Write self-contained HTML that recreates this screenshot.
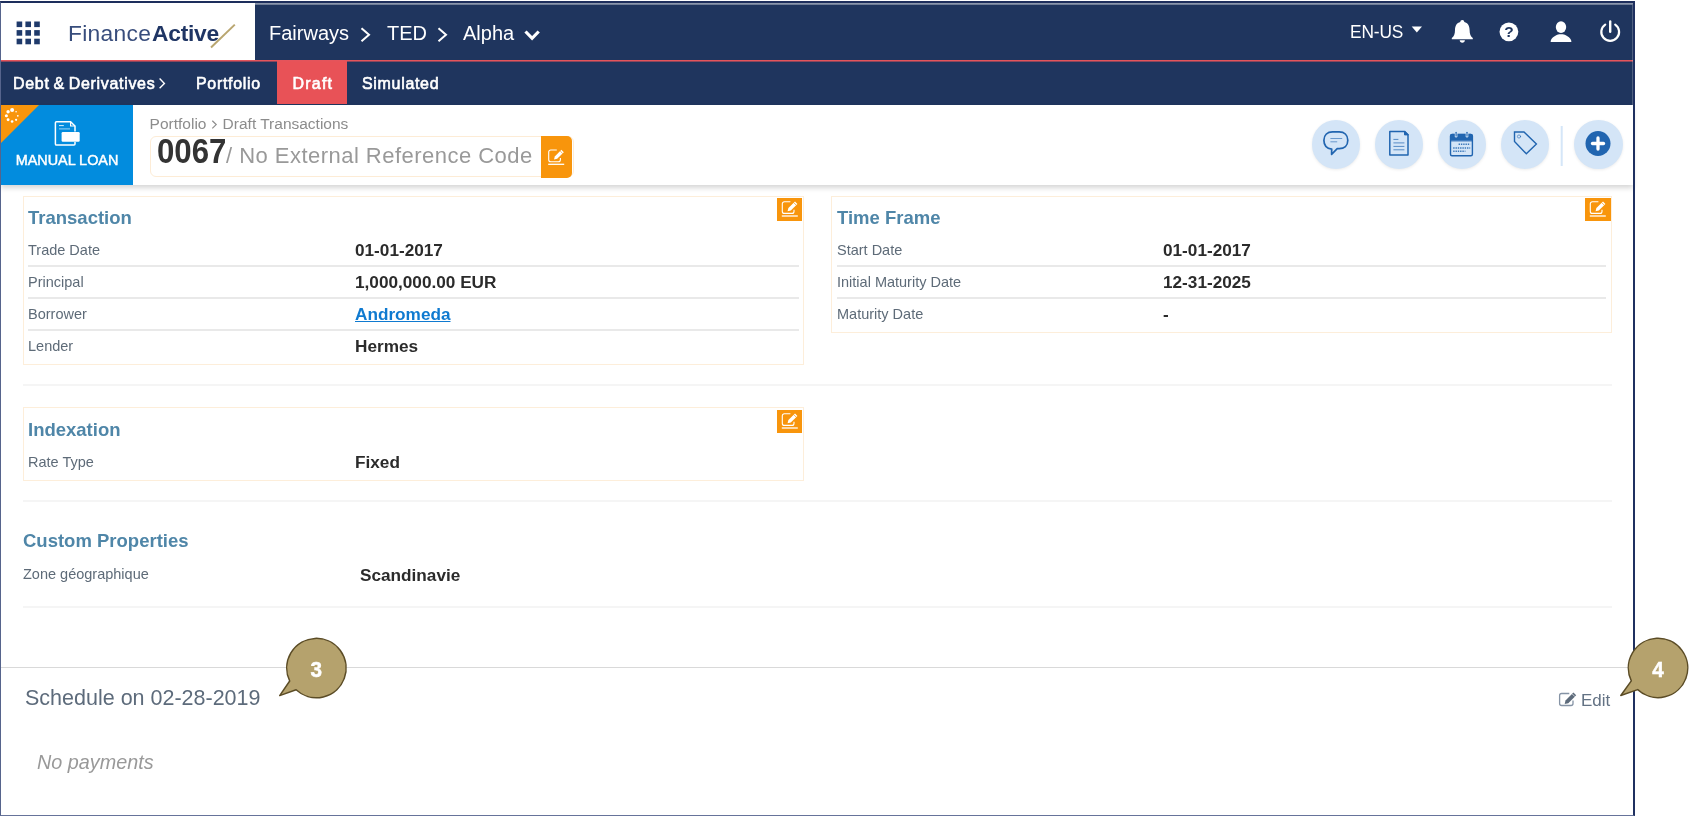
<!DOCTYPE html>
<html lang="en">
<head>
<meta charset="utf-8">
<title>FinanceActive - Manual Loan 0067</title>
<style>
*{box-sizing:border-box;margin:0;padding:0}
html,body{width:1689px;height:816px;overflow:hidden;background:#fff}
body{font-family:"Liberation Sans",sans-serif;position:relative;color:#333}
.abs{position:absolute}
#frame{position:absolute;left:0;top:1px;width:1635px;height:815px;border-style:solid;border-color:#1d2e5c #1f3060 #66739a #56648c;border-width:2px 2px 1px 1px;pointer-events:none;z-index:30}
#topline{position:absolute;left:255px;top:3px;width:1378px;height:2px;background:linear-gradient(rgba(255,255,255,.55),rgba(255,255,255,.3));z-index:31}
#topbar{position:absolute;left:1px;top:3px;width:1632px;height:57px;background:#1f355e}
#logo{position:absolute;left:0;top:0;width:254px;height:57px;background:#fff}
#redline{position:absolute;left:1px;top:60px;width:1632px;height:2px;background:linear-gradient(#e5545b 50%,rgba(229,84,91,.55) 50%);z-index:2}
#subnav{position:absolute;left:1px;top:61px;width:1632px;height:44px;background:#1f355e}
#subnav .t{position:absolute;top:1px;height:44px;line-height:43px;color:#fff;font-size:16px;font-weight:normal;-webkit-text-stroke:.6px #fff;letter-spacing:.68px;word-spacing:-1.2px;white-space:nowrap;transform:scaleY(1.05);transform-origin:0 62%}
#draft{position:absolute;left:276px;top:0;width:70px;height:43px;background:#e85257}
.crumb{position:absolute;top:1px;height:57px;line-height:59px;color:#fff;font-size:20px;white-space:nowrap}
#header{position:absolute;left:1px;top:105px;width:1632px;height:80px;background:#fff;box-shadow:0 3px 5px rgba(0,0,0,.16)}
#tile{position:absolute;left:0;top:0;width:132px;height:80px;background:#028cde;overflow:hidden}
#tile .corner{position:absolute;left:0;top:0;width:0;height:0;border-top:38px solid #f8950c;border-right:38px solid transparent}
#tile .lbl{-webkit-text-stroke:0.45px #fff;position:absolute;left:0;width:132px;top:47px;text-align:center;color:#fff;font-size:14.4px;line-height:16px;white-space:nowrap}
#bc{position:absolute;left:148.600px;top:11px;font-size:15.5px;line-height:16px;color:#8c8c8c;white-space:nowrap}
#titlebox{position:absolute;left:149px;top:31px;width:424px;height:41px;border:1px solid #fdecd6;border-radius:6px}
#titlebox .num{position:absolute;left:6px;top:-5px;font-size:32px;line-height:40px;font-weight:bold;color:#333;transform:scale(.975,1.07);transform-origin:0 78%}
#titlebox .ref{position:absolute;left:75px;top:-1px;font-size:22px;letter-spacing:.47px;line-height:40px;color:#999;white-space:nowrap}
#titlebox .btn{position:absolute;left:390px;top:-1px;width:31px;height:42px;background:#f8950c;border-radius:0 5px 5px 0}
.circ{position:absolute;top:15px;width:48.500px;height:48.500px;border-radius:50%;background:#d4e5f7;box-shadow:0 1px 3px rgba(0,0,0,.08)}
.panel{position:absolute;border:1px solid #fdeeda;background:#fff}
.ptitle{position:absolute;font-size:18.5px;font-weight:bold;color:#4f86a8;line-height:20px;white-space:nowrap}
.lab{position:absolute;margin-top:-1px;font-size:14.5px;line-height:16px;color:#5e6b78;white-space:nowrap}
.val{position:absolute;margin-top:0px;font-size:17.2px;line-height:20px;font-weight:bold;color:#2b2b2b;white-space:nowrap}
.sep{position:absolute;height:2px;background:#e9e9e9}
.hr{position:absolute;height:2px;background:#f5f5f5}
.ebtn{position:absolute;width:25px;height:23px;background:#f8950c}
</style>
</head>
<body>
<div id="root" style="position:absolute;left:0;top:0;width:1689px;height:816px;will-change:transform">
<div id="topbar">
  <div id="logo">
    <svg class="abs" style="left:15px;top:18px" width="26" height="26" viewBox="0 0 26 26"><g fill="#1f3a6b"><rect x="0.6" y="0.5" width="5.6" height="5.6"/><rect x="9.4" y="0.5" width="5.6" height="5.6"/><rect x="18.2" y="0.5" width="5.6" height="5.6"/><rect x="0.6" y="9.1" width="5.6" height="5.6"/><rect x="9.4" y="9.1" width="5.6" height="5.6"/><rect x="18.2" y="9.1" width="5.6" height="5.6"/><rect x="0.6" y="17.7" width="5.6" height="5.6"/><rect x="9.4" y="17.7" width="5.6" height="5.6"/><rect x="18.2" y="17.7" width="5.6" height="5.6"/></g></svg>
    <div class="abs" id="lg" style="left:67px;top:10px;font-size:22.800px;line-height:40px;color:#384d7c;white-space:nowrap;letter-spacing:0.300px">Finance<b style="color:#1f3564;margin-left:0.800px;letter-spacing:-0.250px">Active</b></div>
    <svg class="abs" style="left:205px;top:18px" width="34" height="30" viewBox="0 0 34 30"><line x1="5" y1="26.5" x2="28.8" y2="3.6" stroke="#b9a670" stroke-width="2"/></svg>
  </div>
  <div class="crumb" style="left:268px">Fairways</div>
  <div class="crumb" style="left:386px">TED</div>
  <div class="crumb" style="left:462px">Alpha</div>
  <div class="crumb" style="left:1349px;font-size:17.300px;top:0px;transform:scaleY(1.08);transform-origin:0 58%;letter-spacing:-0.100px">EN-US</div>
</div>
<div id="redline"></div>
<div id="subnav">
  <div class="t" style="left:12px">Debt &amp; Derivatives</div>
  <div class="t" style="left:195px">Portfolio</div>
  <div id="draft"></div>
  <div class="t" style="left:291.500px;letter-spacing:1.200px">Draft</div>
  <div class="t" style="left:361px">Simulated</div>
</div>
<div id="header">
  <div id="tile"><div class="corner"></div><div class="lbl">MANUAL LOAN</div></div>
  <div id="bc">Portfolio<span style="position:absolute;left:73px;top:0">Draft Transactions</span></div>
  <div id="titlebox"><span class="num">0067</span><span class="ref">/ No External Reference Code</span><div class="btn"></div></div>
  <div class="circ" style="left:1310.500px"></div>
  <div class="circ" style="left:1373.600px"></div>
  <div class="circ" style="left:1436.700px"></div>
  <div class="circ" style="left:1499.800px"></div>
  <div class="circ" style="left:1573px"></div>
</div>

<!-- Transaction panel -->
<div class="panel" style="left:23px;top:196px;width:781px;height:169px"></div>
<div class="ptitle" style="left:28px;top:208px">Transaction</div>
<div class="ebtn" style="left:777px;top:198px"></div>
<div class="lab" style="left:28px;top:243px">Trade Date</div>
<div class="val" style="left:355px;top:240px">01-01-2017</div>
<div class="sep" style="left:28px;top:265px;width:771px"></div>
<div class="lab" style="left:28px;top:275px">Principal</div>
<div class="val" style="left:355px;top:272px">1,000,000.00 EUR</div>
<div class="sep" style="left:28px;top:297px;width:771px"></div>
<div class="lab" style="left:28px;top:307px">Borrower</div>
<div class="val" style="left:355px;top:304px;color:#0f7ad0;text-decoration:underline">Andromeda</div>
<div class="sep" style="left:28px;top:329px;width:771px"></div>
<div class="lab" style="left:28px;top:339px">Lender</div>
<div class="val" style="left:355px;top:336px">Hermes</div>

<!-- Time Frame panel -->
<div class="panel" style="left:831px;top:196px;width:781px;height:137px"></div>
<div class="ptitle" style="left:837px;top:208px">Time Frame</div>
<div class="ebtn" style="left:1585px;top:198px;width:26px"></div>
<div class="lab" style="left:837px;top:243px">Start Date</div>
<div class="val" style="left:1163px;top:240px">01-01-2017</div>
<div class="sep" style="left:837px;top:265px;width:769px"></div>
<div class="lab" style="left:837px;top:275px">Initial Maturity Date</div>
<div class="val" style="left:1163px;top:272px">12-31-2025</div>
<div class="sep" style="left:837px;top:297px;width:769px"></div>
<div class="lab" style="left:837px;top:307px">Maturity Date</div>
<div class="val" style="left:1163px;top:304px">-</div>

<div class="hr" style="left:23px;top:384px;width:1589px"></div>

<!-- Indexation panel -->
<div class="panel" style="left:23px;top:407px;width:781px;height:74px"></div>
<div class="ptitle" style="left:28px;top:420px">Indexation</div>
<div class="ebtn" style="left:777px;top:410px"></div>
<div class="lab" style="left:28px;top:455px">Rate Type</div>
<div class="val" style="left:355px;top:452px">Fixed</div>

<div class="hr" style="left:23px;top:500px;width:1589px"></div>

<!-- Custom properties -->
<div class="ptitle" style="left:23px;top:531px">Custom Properties</div>
<div class="lab" style="left:23px;top:567px">Zone g&eacute;ographique</div>
<div class="val" style="left:360px;top:565px">Scandinavie</div>
<div class="hr" style="left:23px;top:606px;width:1589px"></div>

<!-- Schedule -->
<div class="abs" style="left:1px;top:667px;width:1632px;height:1px;background:#d9d9d9"></div>
<div class="abs" id="sched" style="left:25px;top:686px;font-size:21.5px;line-height:24px;color:#5d6b7b;white-space:nowrap">Schedule on 02-28-2019</div>
<div class="abs" id="nopay" style="left:37px;top:751px;font-size:19.8px;line-height:22px;font-style:italic;color:#999;white-space:nowrap">No payments</div>
<div class="abs" id="edit" style="left:1581px;top:691px;font-size:17px;line-height:20px;color:#637284;white-space:nowrap">Edit</div>

<svg id="ov" class="abs" style="left:0;top:0;z-index:40;pointer-events:none" width="1689" height="816" viewBox="0 0 1689 816">
<!-- spinner -->
<g fill="#fff"><circle cx="12.1" cy="110.1" r="2.0"/><circle cx="8.1" cy="111.8" r="1.7"/><circle cx="6.4" cy="115.8" r="1.55"/><circle cx="8.1" cy="119.8" r="1.45"/><circle cx="12.1" cy="121.5" r="1.3"/><circle cx="16.1" cy="119.8" r="1.1"/><circle cx="17.8" cy="115.8" r="0.9"/><circle cx="16.1" cy="111.8" r="0.8"/></g>
<!-- tile doc icon -->
<g fill="none" stroke="#fff" stroke-width="1.500" stroke-linejoin="round">
<path d="M75 131.500 V126 L70.600 121.700 H56.500 A1.100 1.100 0 0 0 55.400 122.800 V144 A1.100 1.100 0 0 0 56.500 145.100 H74 A1 1 0 0 0 75 144.100 V142"/>
<path d="M70.600 121.700 V126 H75" stroke-width="1.200"/>
<line x1="59" y1="125.600" x2="63.800" y2="125.600" stroke-width="1" opacity=".85"/>
<line x1="59" y1="128.900" x2="70" y2="128.900" stroke-width="1" opacity=".6"/>
</g>
<rect x="61.600" y="132" width="18.100" height="9.700" rx="1.200" fill="#fff"/>
<!-- title edit icon -->
<g transform="translate(548.2 149.5)" fill="none" stroke="#fff">
<path d="M8.600 0.500 H2.500 A2 2 0 0 0 0.500 2.500 V10.200 A2 2 0 0 0 2.500 12.200 H10.200 A2 2 0 0 0 12.200 10.200 V8.600" stroke-width="1.100"/>
<line x1="0" y1="14.800" x2="16" y2="14.800" stroke-width="1.300"/>
<path d="M5.800 10 L6.600 6.900 L13.200 0.300 L15.600 2.700 L9 9.300 Z" fill="#fff" stroke="none"/>
<line x1="12" y1="1.500" x2="14.400" y2="3.900" stroke="#f8950c" stroke-width="0.700"/>
</g>
<!-- panel edit icons -->
<g transform="translate(781.8 201.2)" fill="none" stroke="#fff">
<path d="M8.600 0.500 H2.500 A2 2 0 0 0 0.500 2.500 V10.200 A2 2 0 0 0 2.500 12.200 H10.200 A2 2 0 0 0 12.200 10.200 V8.600" stroke-width="1.100"/>
<line x1="0" y1="14.800" x2="16" y2="14.800" stroke-width="1.300"/>
<path d="M5.800 10 L6.600 6.900 L13.200 0.300 L15.600 2.700 L9 9.300 Z" fill="#fff" stroke="none"/>
<line x1="12" y1="1.500" x2="14.400" y2="3.900" stroke="#f8950c" stroke-width="0.700"/>
</g>
<g transform="translate(1589.8 201.2)" fill="none" stroke="#fff">
<path d="M8.600 0.500 H2.500 A2 2 0 0 0 0.500 2.500 V10.200 A2 2 0 0 0 2.500 12.200 H10.200 A2 2 0 0 0 12.200 10.200 V8.600" stroke-width="1.100"/>
<line x1="0" y1="14.800" x2="16" y2="14.800" stroke-width="1.300"/>
<path d="M5.800 10 L6.600 6.900 L13.200 0.300 L15.600 2.700 L9 9.300 Z" fill="#fff" stroke="none"/>
<line x1="12" y1="1.500" x2="14.400" y2="3.900" stroke="#f8950c" stroke-width="0.700"/>
</g>
<g transform="translate(781.8 413.2)" fill="none" stroke="#fff">
<path d="M8.600 0.500 H2.500 A2 2 0 0 0 0.500 2.500 V10.200 A2 2 0 0 0 2.500 12.200 H10.200 A2 2 0 0 0 12.200 10.200 V8.600" stroke-width="1.100"/>
<line x1="0" y1="14.800" x2="16" y2="14.800" stroke-width="1.300"/>
<path d="M5.800 10 L6.600 6.900 L13.200 0.300 L15.600 2.700 L9 9.300 Z" fill="#fff" stroke="none"/>
<line x1="12" y1="1.500" x2="14.400" y2="3.900" stroke="#f8950c" stroke-width="0.700"/>
</g>
<!-- bc chevron -->
<polyline points="212.3,120.800 216.200,124.600 212.300,128.400" fill="none" stroke="#8c8c8c" stroke-width="1.200"/>
<!-- action icons -->
<g fill="none" stroke="#2165b0" stroke-width="1.400" stroke-linejoin="round" stroke-linecap="round">
<!-- chat -->
<path stroke-width="1.700" d="M1331.700 149.100 C1326.500 148.500 1323.900 145 1323.900 140.300 C1323.900 134.800 1327.500 131.900 1332.500 131.900 H1339.200 C1344.200 131.900 1347.800 134.800 1347.800 140.300 C1347.800 145.800 1344.200 148.700 1339.200 148.700 H1337.200 L1331.600 154.300 Z"/>
<line x1="1330.800" y1="138.500" x2="1341.800" y2="138.500" stroke-width="1" opacity=".6"/>
<line x1="1330.800" y1="141.800" x2="1336.800" y2="141.800" stroke-width="1" opacity=".6"/>
<!-- doc -->
<path d="M1389.800 131.400 H1404.500 L1408 134.900 V154.900 H1389.800 Z" stroke-width="1.500"/>
<path d="M1404.500 131.400 V134.900 H1408 Z" fill="#2165b0" stroke-width="1"/>
<g stroke-width="1" opacity=".7"><line x1="1393.800" y1="139.400" x2="1398" y2="139.400"/><line x1="1393.800" y1="142.900" x2="1404" y2="142.900"/><line x1="1393.800" y1="146.400" x2="1404" y2="146.400"/><line x1="1393.800" y1="149.800" x2="1404" y2="149.800"/></g>
<!-- calendar -->
<rect x="1450.500" y="134.400" width="21.900" height="21.300" rx="1.500" stroke-width="1.400"/>
<path d="M1450.500 140.500 V135.900 A1.500 1.500 0 0 1 1452 134.400 H1470.900 A1.500 1.500 0 0 1 1472.400 135.900 V140.500 Z" fill="#2165b0" stroke-width="1"/>
<line x1="1456.100" y1="132.300" x2="1456.100" y2="136.200" stroke="#d5e6f8" stroke-width="2.600"/><line x1="1467" y1="132.300" x2="1467" y2="136.200" stroke="#d5e6f8" stroke-width="2.600"/>
<line x1="1456.100" y1="132.300" x2="1456.100" y2="136" stroke-width="1.100"/><line x1="1467" y1="132.300" x2="1467" y2="136" stroke-width="1.100"/>
<g stroke-width="1.500" stroke-dasharray="1.400 0.900" stroke-linecap="butt" opacity=".85"><line x1="1458.600" y1="144.300" x2="1470.200" y2="144.300"/><line x1="1453.200" y1="147.900" x2="1470.200" y2="147.900"/><line x1="1453.200" y1="151.300" x2="1465.400" y2="151.300"/></g>
<!-- tag -->
<path d="M1514.500 132 H1524 L1536.400 143.900 L1526.300 153.700 L1514.500 141.500 Z" stroke-width="1.400" stroke-linejoin="miter"/>
<circle cx="1519" cy="136.500" r="1.600" stroke-width=".8" opacity=".7"/>
</g>
<!-- separator -->
<rect x="1560.700" y="126" width="2" height="40" fill="#d5e6f8"/>
<!-- plus -->
<circle cx="1598" cy="143.500" r="12.500" fill="#2165b0"/>
<g stroke="#fff" stroke-width="3.300" stroke-linecap="round"><line x1="1592.500" y1="143.500" x2="1603.500" y2="143.500"/><line x1="1598" y1="138" x2="1598" y2="149"/></g>
<!-- edit link icon -->
<path d="M1569.300 693.500 H1561.600 A2 2 0 0 0 1559.600 695.500 V703.500 A2 2 0 0 0 1561.600 705.500 H1571 A2 2 0 0 0 1573 703.500 V700.500" fill="none" stroke="#8593a5" stroke-width="1.300"/>
<path d="M1564.700 704 L1565.500 700.400 L1573.400 692.500 L1576.200 695.300 L1568.300 703.200 Z" fill="#5d6b7b"/>
<line x1="1572.100" y1="693.800" x2="1574.900" y2="696.600" stroke="#fff" stroke-width=".7"/>
<!-- badges -->
<path d="M289.7 681.0 L279.7 695.6 L296.1 689.7 A29.7 29.7 0 1 0 289.7 681.0 Z" fill="#b5a26d" stroke="#5b4c26" stroke-width="1.500" stroke-linejoin="round"/>
<text transform="translate(316.3 677.0) scale(.94 1)" x="0" y="0" text-anchor="middle" font-family="Liberation Sans, sans-serif" font-weight="bold" font-size="22" fill="#fff" stroke="#fff" stroke-width=".500">3</text>
<path d="M1631.3 680.9 L1620.8 695.5 L1637.7 689.6 A29.7 29.7 0 1 0 1631.3 680.9 Z" fill="#b5a26d" stroke="#5b4c26" stroke-width="1.500" stroke-linejoin="round"/>
<text transform="translate(1657.9 676.9) scale(.94 1)" x="0" y="0" text-anchor="middle" font-family="Liberation Sans, sans-serif" font-weight="bold" font-size="22" fill="#fff" stroke="#fff" stroke-width=".500">4</text>
<!-- breadcrumb chevrons -->
<g fill="none" stroke="#fff" stroke-width="2" stroke-linecap="butt" stroke-linejoin="miter">
<polyline points="361.5,28.2 369,34.7 361.5,41.2"/>
<polyline points="438.5,28.2 446,34.7 438.5,41.2"/>
<polyline points="525.5,31.5 532.1,38.3 538.7,31.5" stroke-width="3.2"/>
<polyline points="159.6,78.6 164.4,83.4 159.6,88.2" stroke-width="1.4"/>
</g>
<!-- caret -->
<path d="M1411.7 26.4 L1422 26.4 L1416.85 32.4 Z" fill="#fff"/>
<!-- bell -->
<path d="M1462.3 20 c1.2 0 2 .8 2 1.9 c3.6 .9 5.3 4 5.3 8 c0 4.2 1.1 6.3 3.2 8.1 l0 1.3 l-21 0 l0 -1.3 c2.1 -1.8 3.2 -3.900 3.200 -8.100 c0 -4 1.7 -7.100 5.300 -8 c0 -1.100 .8 -1.900 2 -1.900 Z M1459.7 40.200 l5.2 0 c0 1.5 -1.100 2.500 -2.600 2.500 c-1.500 0 -2.600 -1 -2.600 -2.500 Z" fill="#fff"/>
<!-- help -->
<circle cx="1508.9" cy="31.8" r="9.4" fill="#fff"/>
<text x="1508.9" y="37.3" text-anchor="middle" font-family="Liberation Sans, sans-serif" font-weight="bold" font-size="15.5" fill="#1f355e">?</text>
<!-- user -->
<ellipse cx="1561" cy="27.1" rx="5.2" ry="5.9" fill="#fff"/>
<path d="M1550.6 42 C1550.8 38 1554.5 36 1558 34.6 C1559.5 34 1562.5 34 1564 34.6 C1567.500 36 1571.200 38 1571.400 42 Z" fill="#fff"/>
<!-- power -->
<path d="M1605.2 24.6 A8.9 8.9 0 1 0 1615.2 24.6" fill="none" stroke="#fff" stroke-width="2.2" stroke-linecap="round"/>
<line x1="1610.2" y1="21.5" x2="1610.2" y2="31.800" stroke="#fff" stroke-width="2.4" stroke-linecap="round"/>
</svg>
<div class="abs" style="left:1632px;top:5px;width:1px;height:100px;background:rgba(255,255,255,.22);z-index:31"></div>
<div id="frame"></div><div id="topline"></div>
</div>
</body>
</html>
